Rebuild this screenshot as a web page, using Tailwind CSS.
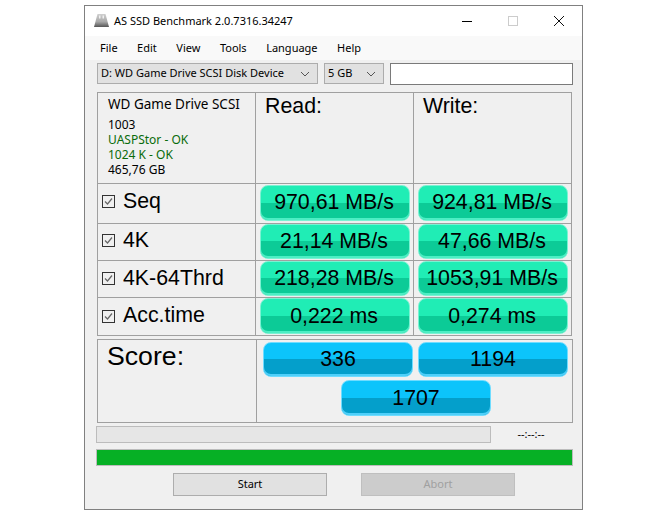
<!DOCTYPE html>
<html lang="en">
<head>
<meta charset="UTF-8">
<script src="https://cdn.jsdelivr.net/npm/@tailwindcss/browser@4"></script>
<title>AS SSD Benchmark</title>
</head>
<body class="bg-white h-[517px] overflow-hidden [font-family:'Liberation_Sans',sans-serif]">
<div class="ml-[84px] mt-[5px] w-[499px] h-[505px] border border-[#808080] bg-[#f0f0f0] flex flex-col">
  <!-- title bar -->
  <div class="h-[30px] bg-white flex items-center pl-[8px] [font-family:'Noto_Sans',sans-serif] text-[11px] text-black">
    <svg width="17" height="16" viewBox="0 0 17 16" class="mr-[4px]">
      <defs><linearGradient id="hdd" x1="0" y1="0" x2="0" y2="1"><stop offset="0" stop-color="#d0d0d0"/><stop offset="0.6" stop-color="#a8a8a8"/><stop offset="1" stop-color="#555555"/></linearGradient></defs>
      <path d="M4.500 1h8l3.500 13H1z" fill="url(#hdd)"/>
      <path d="M6 2.500h1.500v3h-1.500zM9.500 2.500h1.500v3h-1.500z" fill="#f0f0f0"/>
    </svg>
    <span class="grow">AS SSD Benchmark 2.0.7316.34247</span>
    <div class="w-[46px] h-[30px] flex items-center justify-center"><div class="w-[10px] h-px bg-black"></div></div>
    <div class="w-[46px] h-[30px] flex items-center justify-center"><div class="w-[10px] h-[10px] border border-[#cccccc]"></div></div>
    <div class="w-[46px] h-[30px] flex items-center justify-center">
      <svg width="10" height="10" viewBox="0 0 10 10"><path d="M0 0L10 10M10 0L0 10" stroke="#111" fill="none"/></svg>
    </div>
  </div>
  <!-- menu -->
  <div class="h-[24px] bg-[#f9f9f9] flex items-center pl-[15px] gap-[19.500px] [font-family:'Noto_Sans',sans-serif] text-[11px] text-black">
    <span>File</span><span>Edit</span><span>View</span><span>Tools</span><span>Language</span><span>Help</span>
  </div>
  <!-- selectors -->
  <div class="flex items-start mt-[3px] ml-[12px] [font-family:'Noto_Sans',sans-serif] text-[11px] text-black">
    <div class="w-[221px] h-[21px] border border-[#acacac] bg-[#e1e1e1] flex items-center justify-between pl-[3px] pr-[7px] whitespace-nowrap">
      <span>D: WD Game Drive SCSI Disk Device</span>
      <svg width="10" height="6" viewBox="0 0 10 6"><path d="M1 1L5 5L9 1" stroke="#555" fill="none"/></svg>
    </div>
    <div class="w-[60px] h-[21px] ml-[6px] border border-[#acacac] bg-[#e1e1e1] flex items-center justify-between pl-[3px] pr-[7px]">
      <span>5 GB</span>
      <svg width="10" height="6" viewBox="0 0 10 6"><path d="M1 1L5 5L9 1" stroke="#555" fill="none"/></svg>
    </div>
    <div class="w-[183px] h-[22px] ml-[6px] border border-[#7a7a7a] bg-white"></div>
  </div>
  <!-- results table -->
  <div class="ml-[12px] mt-[7px] w-[475px] h-[244px] border border-[#a0a0a0] grid grid-cols-[157px_157px_157px] grid-rows-[90px_39px_36px_36px_37px] bg-[#a0a0a0] gap-px text-black text-[21.33px]">
    <div class="bg-[#f0f0f0] pl-[10px] pt-[3px] [font-family:'Noto_Sans',sans-serif]">
      <div class="text-[13.500px] leading-[16px]">WD Game Drive SCSI</div>
      <div class="text-[12px] leading-[15px] mt-[5px]">1003</div>
      <div class="text-[12px] leading-[15px] text-[#0a6b0a]">UASPStor - OK</div>
      <div class="text-[12px] leading-[15px] text-[#0a6b0a]">1024 K - OK</div>
      <div class="text-[12px] leading-[15px]">465,76 GB</div>
    </div>
    <div class="bg-[#f0f0f0] pl-[9px] leading-[26px]">Read:</div>
    <div class="bg-[#f0f0f0] pl-[9px] leading-[26px]">Write:</div>

    <div class="bg-[#f0f0f0] flex items-center pl-[4px] pb-[4px]">
      <span class="w-[13px] h-[13px] border border-[#333333] flex items-center justify-center mr-[8px]"><svg width="9" height="9" viewBox="0 0 9 9"><path d="M1 4.500L3.500 7L8 1.500" stroke="#666" stroke-width="1.200" fill="none"/></svg></span>Seq
    </div>
    <div class="bg-[#f0f0f0] pl-[4px] pt-[1px]"><div class="w-[150px] h-[36px] pr-[2px] rounded-[8px] flex items-center justify-center border border-[#7af2d2] shadow-[inset_0_-2px_0_#4deec4] bg-[linear-gradient(#20edb5_0,#20edb5_50%,#0ccb97_50%,#0ccb97_100%)]">970,61 MB/s</div></div>
    <div class="bg-[#f0f0f0] pl-[4px] pt-[1px]"><div class="w-[150px] h-[36px] pr-[2px] rounded-[8px] flex items-center justify-center border border-[#7af2d2] shadow-[inset_0_-2px_0_#4deec4] bg-[linear-gradient(#20edb5_0,#20edb5_50%,#0ccb97_50%,#0ccb97_100%)]">924,81 MB/s</div></div>

    <div class="bg-[#f0f0f0] flex items-center pl-[4px] pb-[3px]">
      <span class="w-[13px] h-[13px] border border-[#333333] flex items-center justify-center mr-[8px]"><svg width="9" height="9" viewBox="0 0 9 9"><path d="M1 4.500L3.500 7L8 1.500" stroke="#666" stroke-width="1.200" fill="none"/></svg></span>4K
    </div>
    <div class="bg-[#f0f0f0] pl-[4px]"><div class="w-[150px] h-[35px] pr-[2px] pt-[1px] rounded-[8px] flex items-center justify-center border border-[#7af2d2] shadow-[inset_0_-2px_0_#4deec4] bg-[linear-gradient(#20edb5_0,#20edb5_50%,#0ccb97_50%,#0ccb97_100%)]">21,14 MB/s</div></div>
    <div class="bg-[#f0f0f0] pl-[4px]"><div class="w-[150px] h-[35px] pr-[2px] pt-[1px] rounded-[8px] flex items-center justify-center border border-[#7af2d2] shadow-[inset_0_-2px_0_#4deec4] bg-[linear-gradient(#20edb5_0,#20edb5_50%,#0ccb97_50%,#0ccb97_100%)]">47,66 MB/s</div></div>

    <div class="bg-[#f0f0f0] flex items-center pl-[4px] pb-[1px]">
      <span class="w-[13px] h-[13px] border border-[#333333] flex items-center justify-center mr-[8px]"><svg width="9" height="9" viewBox="0 0 9 9"><path d="M1 4.500L3.500 7L8 1.500" stroke="#666" stroke-width="1.200" fill="none"/></svg></span>4K-64Thrd
    </div>
    <div class="bg-[#f0f0f0] pl-[4px]"><div class="w-[150px] h-[35px] pr-[2px] pt-[1px] rounded-[8px] flex items-center justify-center border border-[#7af2d2] shadow-[inset_0_-2px_0_#4deec4] bg-[linear-gradient(#20edb5_0,#20edb5_50%,#0ccb97_50%,#0ccb97_100%)]">218,28 MB/s</div></div>
    <div class="bg-[#f0f0f0] pl-[4px]"><div class="w-[150px] h-[35px] pr-[2px] pt-[1px] rounded-[8px] flex items-center justify-center border border-[#7af2d2] shadow-[inset_0_-2px_0_#4deec4] bg-[linear-gradient(#20edb5_0,#20edb5_50%,#0ccb97_50%,#0ccb97_100%)]">1053,91 MB/s</div></div>

    <div class="bg-[#f0f0f0] flex items-center pl-[4px] pb-[1px]">
      <span class="w-[13px] h-[13px] border border-[#333333] flex items-center justify-center mr-[8px]"><svg width="9" height="9" viewBox="0 0 9 9"><path d="M1 4.500L3.500 7L8 1.500" stroke="#666" stroke-width="1.200" fill="none"/></svg></span>Acc.time
    </div>
    <div class="bg-[#f0f0f0] pl-[4px]"><div class="w-[150px] h-[36px] pr-[2px] pt-[2px] rounded-[8px] flex items-center justify-center border border-[#7af2d2] shadow-[inset_0_-2px_0_#4deec4] bg-[linear-gradient(#20edb5_0,#20edb5_50%,#0ccb97_50%,#0ccb97_100%)]">0,222 ms</div></div>
    <div class="bg-[#f0f0f0] pl-[4px]"><div class="w-[150px] h-[36px] pr-[2px] pt-[2px] rounded-[8px] flex items-center justify-center border border-[#7af2d2] shadow-[inset_0_-2px_0_#4deec4] bg-[linear-gradient(#20edb5_0,#20edb5_50%,#0ccb97_50%,#0ccb97_100%)]">0,274 ms</div></div>
  </div>
  <!-- score -->
  <div class="ml-[12px] mt-[3px] w-[476px] h-[84px] border border-[#a0a0a0] flex text-black text-[21.33px]">
    <div class="w-[159px] border-r border-[#a0a0a0] pl-[9px] text-[26.670px] leading-[33px]">Score:</div>
    <div class="grow flex flex-col items-start pt-[2px] pl-[6px] gap-[3px]">
      <div class="flex gap-[5px]">
        <div class="w-[150px] h-[35px] pt-[1px] rounded-[8px] flex items-center justify-center border border-[#6fdcff] shadow-[inset_0_-2px_0_#4fd0fa] bg-[linear-gradient(#0cc4fb_0,#0cc4fb_50%,#049fcb_50%,#049fcb_100%)]">336</div>
        <div class="w-[150px] h-[35px] pt-[1px] rounded-[8px] flex items-center justify-center border border-[#6fdcff] shadow-[inset_0_-2px_0_#4fd0fa] bg-[linear-gradient(#0cc4fb_0,#0cc4fb_50%,#049fcb_50%,#049fcb_100%)]">1194</div>
      </div>
      <div class="ml-[78px] w-[150px] h-[36px] pt-[2px] rounded-[8px] flex items-center justify-center border border-[#6fdcff] shadow-[inset_0_-2px_0_#4fd0fa] bg-[linear-gradient(#0cc4fb_0,#0cc4fb_50%,#049fcb_50%,#049fcb_100%)]">1707</div>
    </div>
  </div>
  <!-- progress -->
  <div class="flex items-center mt-[3px] ml-[11px]">
    <div class="w-[395px] h-[17px] border border-[#bcbcbc] bg-[#e6e6e6]"></div>
    <span class="w-[80px] text-center text-[11px] text-black [font-family:'Noto_Sans',sans-serif]">--:--:--</span>
  </div>
  <div class="ml-[11px] mt-[6px] w-[477px] h-[17px] border border-[#bcbcbc] bg-[#06b025]"></div>
  <!-- buttons -->
  <div class="flex ml-[88px] mt-[7px] gap-[34px] [font-family:'Noto_Sans',sans-serif] text-[11px]">
    <div class="w-[154px] h-[23px] border border-[#adadad] bg-[#e1e1e1] flex items-center justify-center text-black">Start</div>
    <div class="w-[154px] h-[23px] border border-[#bfbfbf] bg-[#cccccc] flex items-center justify-center text-[#a0a0a0]">Abort</div>
  </div>
</div>
</body>
</html>
